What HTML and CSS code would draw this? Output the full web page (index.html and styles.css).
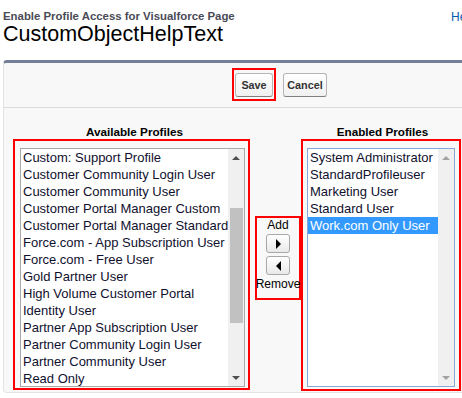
FILE: index.html
```html
<!DOCTYPE html>
<html>
<head>
<meta charset="utf-8">
<link rel="stylesheet" href="styles.css">
</head>
<body>
<div class="page">
  <div class="header">
    <div class="titles">
      <div class="page-type">Enable Profile Access for Visualforce Page</div>
      <div class="page-desc">CustomObjectHelpText</div>
    </div>
    <a class="help">Help for this Page</a>
  </div>

  <div class="panel">
    <div class="btn-row">
      <div class="hl hl-save"><button class="btn btn-save">Save</button></div>
      <button class="btn btn-cancel">Cancel</button>
    </div>

    <div class="dual">
      <div class="col col-left">
        <div class="col-head head-left">Available Profiles</div>
        <div class="hl box-left">
          <div class="list">
            <div class="items">
              <div class="item">Custom: Support Profile</div>
              <div class="item">Customer Community Login User</div>
              <div class="item">Customer Community User</div>
              <div class="item">Customer Portal Manager Custom</div>
              <div class="item">Customer Portal Manager Standard</div>
              <div class="item">Force.com - App Subscription User</div>
              <div class="item">Force.com - Free User</div>
              <div class="item">Gold Partner User</div>
              <div class="item">High Volume Customer Portal</div>
              <div class="item">Identity User</div>
              <div class="item">Partner App Subscription User</div>
              <div class="item">Partner Community Login User</div>
              <div class="item">Partner Community User</div>
              <div class="item">Read Only</div>
            </div>
            <div class="sb">
              <div class="sb-arrow up"></div>
              <div class="sb-track"><div class="sb-thumb"></div></div>
              <div class="sb-arrow down"></div>
            </div>
          </div>
        </div>
      </div>

      <div class="hl box-mid">
        <div class="mid-label">Add</div>
        <button class="arrow-btn"><span class="tri tri-right"></span></button>
        <button class="arrow-btn btn-second"><span class="tri tri-left"></span></button>
        <div class="mid-label mid-remove">Remove</div>
      </div>

      <div class="col col-right">
        <div class="col-head head-right">Enabled Profiles</div>
        <div class="hl box-right">
          <div class="list list-focus">
            <div class="items">
              <div class="item">System Administrator</div>
              <div class="item">StandardProfileuser</div>
              <div class="item">Marketing User</div>
              <div class="item">Standard User</div>
              <div class="item selected">Work.com Only User</div>
            </div>
            <div class="sb sb-disabled">
              <div class="sb-arrow up"></div>
              <div class="sb-track"></div>
              <div class="sb-arrow down"></div>
            </div>
          </div>
        </div>
      </div>
    </div>
  </div>
</div>
</body>
</html>
```
FILE: styles.css
```css
html, body {
  margin: 0;
  padding: 0;
  background: #ffffff;
  overflow: hidden;
}
body {
  font-family: "Liberation Sans", Arial, sans-serif;
  color: #000;
}
.page {
  width: 462px;
}
.header {
  display: flex;
  padding: 9px 0 0 3px;
  height: 60px;
  box-sizing: border-box;
}
.titles {
  flex: 1;
}
.page-type {
  font-size: 11.4px;
  font-weight: bold;
  line-height: 14px;
  color: #4a4a56;
}
.page-desc {
  font-size: 21.5px;
  line-height: 22px;
  color: #000;
}
.help {
  width: 11px;
  white-space: nowrap;
  font-size: 12px;
  line-height: 14px;
  color: #015ba7;
  margin-top: 1px;
}
.panel {
  margin-left: 3px;
  width: 480px;
  background: #f8f8f8;
  border-top: 3px solid #747e96;
  border-left: 1px solid #e3e3e3;
  border-bottom: 1px solid #e3e3e3;
  border-radius: 4px 0 0 4px;
  height: 333px;
  box-sizing: border-box;
}
.btn-row {
  display: flex;
  align-items: flex-start;
  padding: 5px 0 6px 228px;
  border-bottom: 1px solid #dbdbdb;
}
.hl {
  border: 2px solid #ff0000;
}
.hl-save {
  padding: 3px 1px 2px 1px;
}
.btn {
  height: 24px;
  border: 1px solid #b5b5b5;
  border-bottom-color: #7f7f7f;
  border-radius: 3px;
  background: linear-gradient(#ffffff, #f0f0f0);
  font-family: "Liberation Sans", Arial, sans-serif;
  font-size: 10.8px;
  font-weight: bold;
  color: #333333;
  padding: 0;
  box-sizing: border-box;
}
.btn-save {
  width: 38px;
}
.btn-cancel {
  width: 44px;
  margin-left: 7px;
  margin-top: 5px;
}
.dual {
  display: flex;
  align-items: flex-start;
  padding: 17px 0 0 9px;
}
.col-head {
  font-size: 11.7px;
  font-weight: bold;
  line-height: 14px;
  text-align: center;
  color: #000;
}
.col-left {
  width: 237px;
}
.head-left {
  padding-left: 6px;
}
.head-right {
  padding-left: 3px;
}
.box-left {
  padding: 7px 3px 1px 5px;
}
.col-right {
  width: 160px;
}
.box-right {
  padding: 7px 4px 2px 4px;
}
.list {
  display: flex;
  height: 239px;
  border: 1px solid #a9a9a9;
  background: #ffffff;
  box-sizing: border-box;
  overflow: hidden;
}
.list-focus {
  border-color: #89a6d8;
}
.items {
  flex: 1;
  min-width: 0;
}
.item {
  font-size: 13px;
  line-height: 17px;
  height: 17px;
  padding-left: 2px;
  white-space: nowrap;
  color: #10102e;
}
.item.selected {
  background: #3399ff;
  color: #ffffff;
}
.sb {
  width: 16px;
  background: #f0f0f0;
  display: flex;
  flex-direction: column;
}
.sb-arrow {
  height: 17px;
  display: flex;
  align-items: center;
  justify-content: center;
}
.sb-arrow::before {
  content: "";
  width: 0;
  height: 0;
  border-left: 4px solid transparent;
  border-right: 4px solid transparent;
}
.sb-arrow.up::before {
  border-bottom: 4px solid #505050;
}
.sb-arrow.down::before {
  border-top: 4px solid #505050;
}
.sb-disabled .sb-arrow.up::before {
  border-bottom-color: #a3a3a3;
}
.sb-disabled .sb-arrow.down::before {
  border-top-color: #a3a3a3;
}
.sb-track {
  flex: 1;
  padding-top: 42px;
}
.sb-thumb {
  margin-left: 2px;
  width: 13px;
  height: 115px;
  background: #c1c1c1;
}
.box-mid {
  width: 46px;
  height: 84px;
  margin-left: 5px;
  margin-top: 91px;
  box-sizing: border-box;
  display: flex;
  flex-direction: column;
  align-items: center;
}
.mid-label {
  font-size: 12px;
  line-height: 14px;
  white-space: nowrap;
  color: #000;
}
.mid-remove {
  margin-top: 2px;
}
.arrow-btn {
  width: 24px;
  height: 19px;
  margin-top: 2px;
  border: 1px solid #a8a8a8;
  border-radius: 3px;
  background: linear-gradient(#ffffff, #e9e9e9);
  padding: 0;
  display: flex;
  align-items: center;
  justify-content: center;
  box-sizing: border-box;
}
.btn-second {
  margin-top: 3px;
}
.tri {
  width: 0;
  height: 0;
  border-top: 5px solid transparent;
  border-bottom: 5px solid transparent;
}
.tri-right {
  border-left: 5px solid #000;
  margin-left: 1px;
}
.tri-left {
  border-right: 5px solid #000;
}
```
